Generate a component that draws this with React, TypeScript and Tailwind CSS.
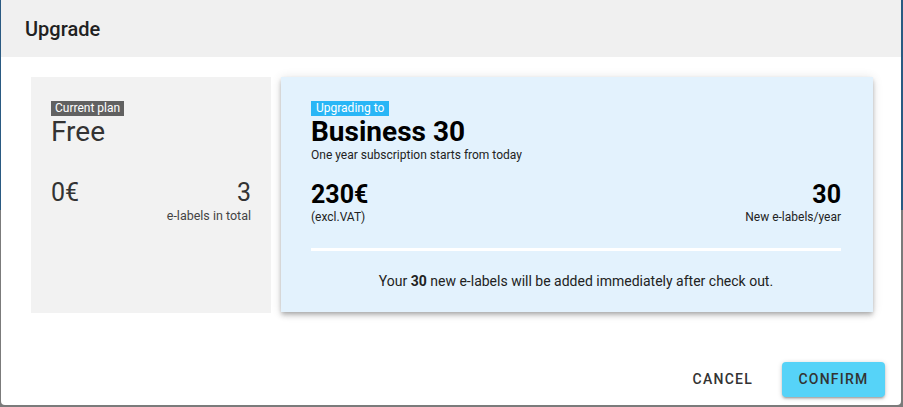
export default function App() {
  return (
    <div
      className="h-[407px] w-[903px] overflow-hidden bg-[linear-gradient(to_bottom,#2a5a82_0,#2a5a82_210px,#7b7b7b_210px)] pl-px"
      style={{ fontFamily: 'Roboto, "Noto Sans", sans-serif' }}
    >
      <div className="flex h-[405px] w-[900px] flex-col overflow-hidden rounded-b-[4px] bg-white text-[#212121]">
        <div className="flex h-[57px] items-center bg-[#f0f0f0] px-6">
          <h2 className="text-[20px] font-medium leading-none">Upgrade</h2>
        </div>

        <div className="flex gap-[10px] pl-[30px] pr-[28px] pt-5">
          <div className="h-[236px] w-[240px] bg-[#f2f2f2] px-5 pt-6 text-[#333]">
            <span className="block w-fit bg-[#616161] px-[4px] text-[12px] leading-[15px] text-white">Current plan</span>
            <p className="mt-[2px] text-[28px] leading-none">Free</p>
            <div className="mt-[34px] flex items-start justify-between">
              <p className="text-[25px] leading-none">0€</p>
              <div className="text-right">
                <p className="text-[25px] leading-none">3</p>
                <p className="mt-[5px] text-[12.5px] leading-none text-[#444]">e-labels in total</p>
              </div>
            </div>
          </div>

          <div className="h-[235px] flex-1 bg-[#e3f2fd] pl-[30px] pr-[32px] pt-6 text-black shadow-[0_2px_4px_-1px_rgba(0,0,0,0.2),0_4px_5px_0_rgba(0,0,0,0.14),0_1px_10px_0_rgba(0,0,0,0.12)]">
            <span className="block w-fit bg-[#29b6f6] px-[5px] text-[12px] leading-[15px] text-white">Upgrading to</span>
            <p className="mt-[2px] text-[28px] font-bold leading-none">Business 30</p>
            <p className="mt-[3px] text-[12px] leading-none text-[#222]">One year subscription starts from today</p>
            <div className="mt-[21px] flex items-start justify-between">
              <div>
                <p className="text-[25px] font-bold leading-none">230€</p>
                <p className="mt-[4px] text-[12px] leading-none text-[#222]">(excl.VAT)</p>
              </div>
              <div className="text-right">
                <p className="text-[25px] font-bold leading-none">30</p>
                <p className="mt-[4px] text-[12px] leading-none text-[#222]">New e-labels/year</p>
              </div>
            </div>
            <div className="mt-[25px] h-[3px] bg-white" />
            <p className="mt-[23px] text-center text-[14px] leading-none text-[#222]">
              Your <b>30</b> new e-labels will be added immediately after check out.
            </p>
          </div>
        </div>

        <div className="mt-auto flex items-center justify-end gap-[21px] pb-[8px] pr-[16px]">
          <button className="h-9 px-2 text-[14px] font-medium uppercase tracking-[1.25px] text-[#333]">Cancel</button>
          <button className="h-[35px] w-[103px] rounded-[4px] bg-[#56d3f8] text-[14px] font-medium uppercase tracking-[1.25px] text-[#333] shadow-[0_2px_2px_0_rgba(0,0,0,0.14),0_3px_1px_-2px_rgba(0,0,0,0.12),0_1px_5px_0_rgba(0,0,0,0.2)]">
            Confirm
          </button>
        </div>
      </div>
    </div>
  )
}
